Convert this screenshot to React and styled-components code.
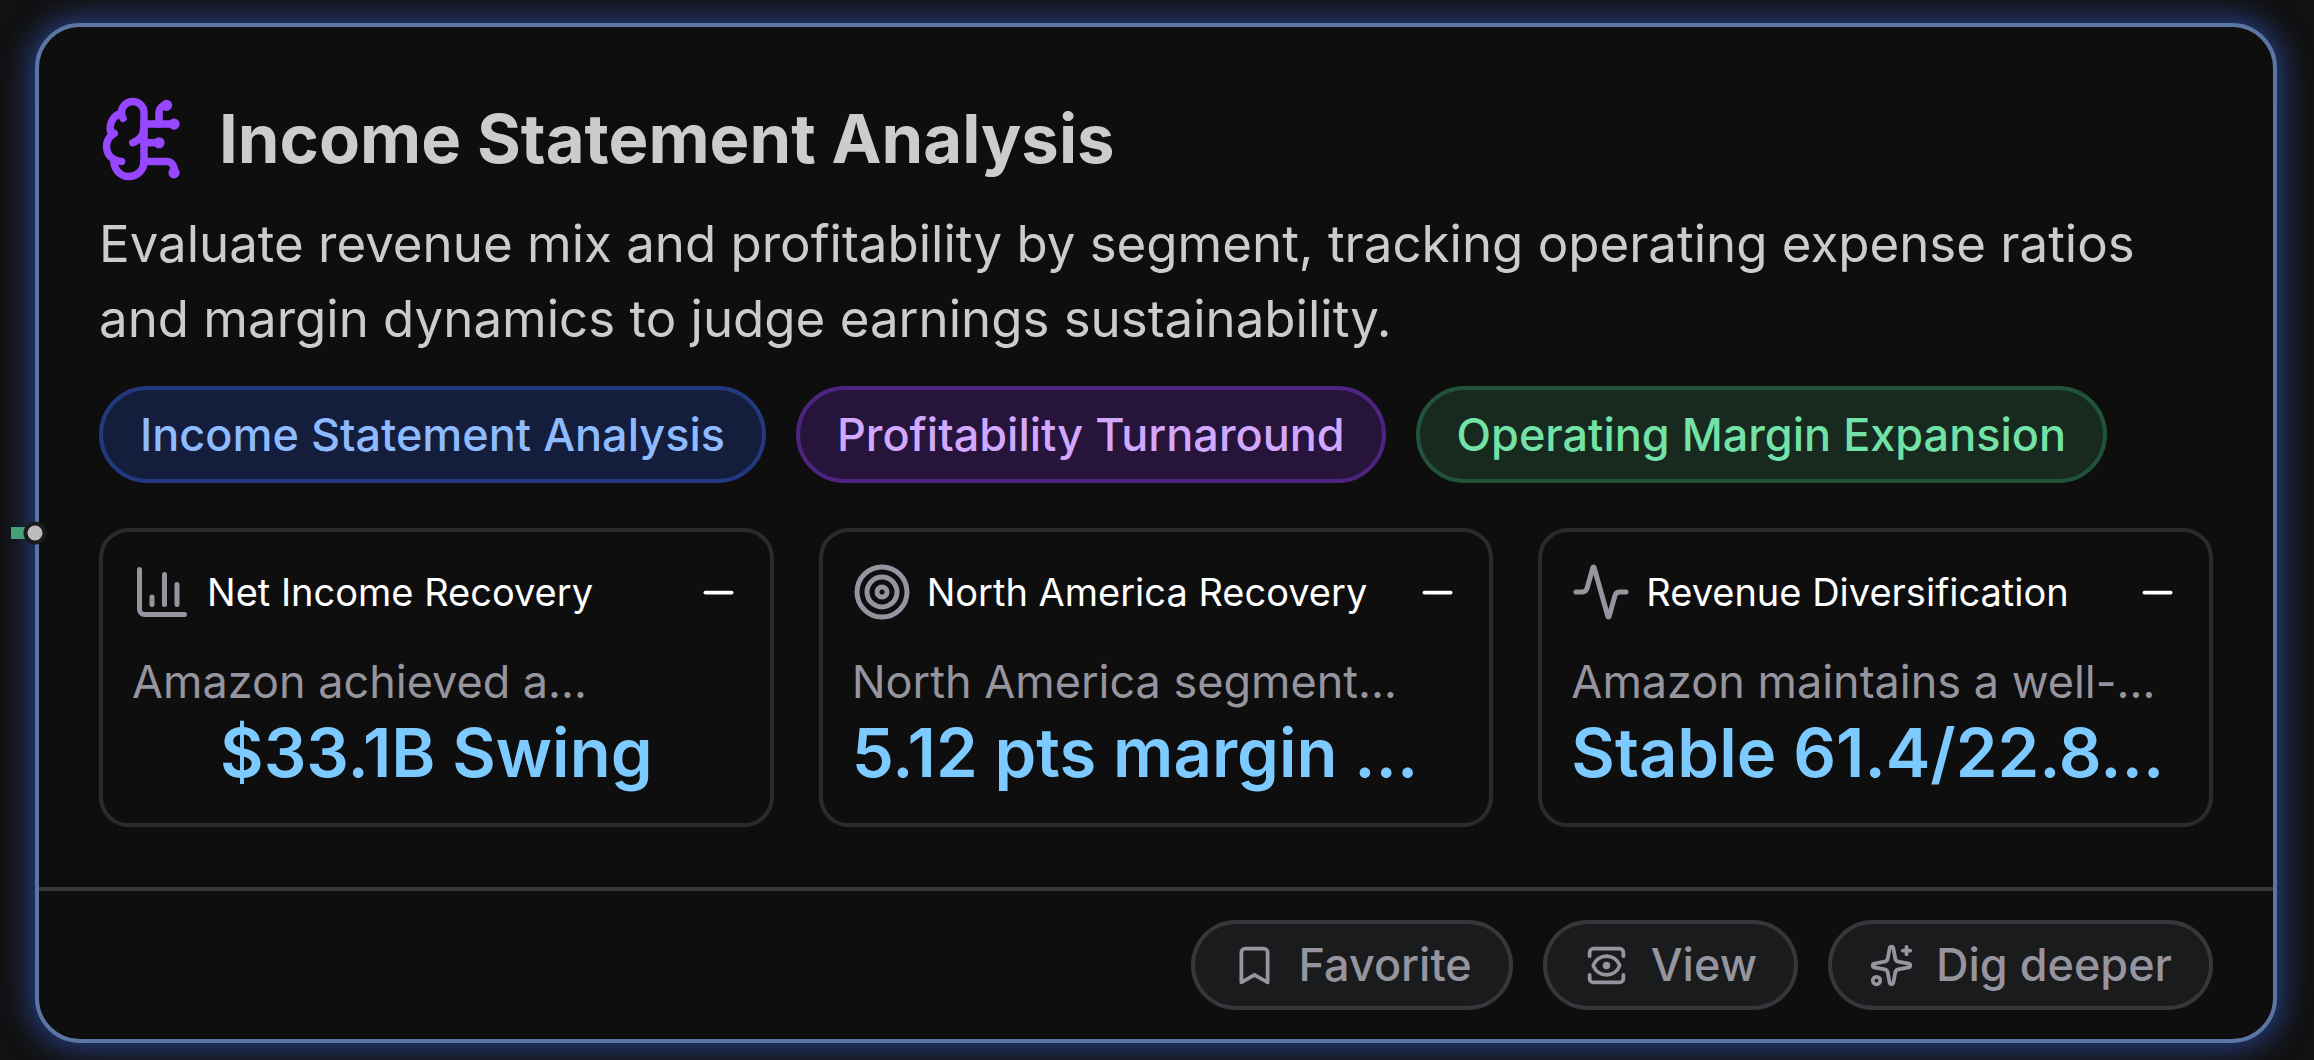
import React from "react";
import styled, { createGlobalStyle } from "styled-components";
import {
  Activity,
  Bookmark,
  BrainCircuit,
  ChartColumn,
  Minus,
  Sparkles,
  Target,
  View,
} from "lucide-react";

const GlobalStyle = createGlobalStyle`
  * {
    box-sizing: border-box;
  }
  body {
    margin: 0;
    background: #111112;
    font-family: Inter, "Liberation Sans", sans-serif;
  }
`;

const Canvas = styled.main`
  min-height: 100vh;
  padding: 23px 37px 17px 35px;
  overflow: hidden;
`;

const Node = styled.article`
  position: relative;
  border: 4px solid #5b76a3;
  border-radius: 45px;
  background: #0e0e0e;
  box-shadow: 0 0 28px 5px rgba(52, 98, 235, 0.5),
    0 0 75px rgba(255, 255, 255, 0.06);
`;

const Edge = styled.span`
  position: absolute;
  top: 50%;
  left: -28px;
  width: 14px;
  height: 12px;
  transform: translateY(-50%);
  background: #45a077;
`;

const Handle = styled.span`
  position: absolute;
  top: 50%;
  left: -4px;
  width: 23px;
  height: 23px;
  transform: translate(-50%, -50%);
  border: 4px solid #1a1b1e;
  border-radius: 50%;
  background: #bdbdbd;
`;

const Body = styled.div`
  padding: 60px;
`;

const Header = styled.header`
  display: flex;
  align-items: center;
  gap: 30px;
  margin-bottom: 15px;
  color: #9747ff;
`;

const Title = styled.h2`
  margin: 0;
  color: #cccccc;
  font-size: 67px;
  font-weight: 700;
  line-height: 104px;
`;

const Description = styled.p`
  margin: 0 0 30px;
  color: #cccccc;
  font-size: 51px;
  line-height: 75px;
`;

const Tags = styled.div`
  display: flex;
  flex-wrap: wrap;
  gap: 30px;
  margin-bottom: 45px;
`;

const tones = {
  blue: { text: "#8ebbff", fill: "#151d3d", line: "#22397f" },
  purple: { text: "#d2a8ff", fill: "#27143b", line: "#4d247f" },
  green: { text: "#73e2a7", fill: "#182a20", line: "#20533a" },
};

const Tag = styled.span`
  padding: 15px 37px;
  border: 4px solid ${({ $tone }) => tones[$tone].line};
  border-radius: 49px;
  background: ${({ $tone }) => tones[$tone].fill};
  color: ${({ $tone }) => tones[$tone].text};
  font-size: 45px;
  font-weight: 500;
  line-height: 59px;
`;

const Cards = styled.div`
  display: grid;
  grid-template-columns: repeat(3, minmax(0, 1fr));
  gap: 45px;
`;

const Card = styled.section`
  padding: 29px;
  border: 4px solid #2a2b2e;
  border-radius: 30px;
`;

const CardHeader = styled.div`
  display: flex;
  align-items: center;
  gap: 15px;
  margin-bottom: 29px;
  color: #96959f;
`;

const CardTitle = styled.h3`
  flex: 1;
  margin: 0;
  color: #fff;
  font-size: 38px;
  font-weight: 400;
  line-height: 62px;
  white-space: nowrap;
`;

const CardText = styled.p`
  margin: 0;
  color: #96959f;
  font-size: 45px;
  line-height: 59px;
  white-space: nowrap;
`;

const CardValue = styled.p`
  margin: 0;
  color: #7ccaff;
  font-size: 67px;
  font-weight: 600;
  line-height: 83px;
  text-align: ${({ $centered }) => ($centered ? "center" : "left")};
  white-space: nowrap;
`;

const Footer = styled.footer`
  display: flex;
  justify-content: flex-end;
  gap: 30px;
  padding: 29px 60px;
  border-top: 4px solid #37373b;
`;

const Action = styled.button`
  display: flex;
  align-items: center;
  gap: 22px;
  padding: 11px 37px;
  border: 4px solid #37373b;
  border-radius: 45px;
  background: #1a1b1d;
  color: #96959f;
  font-family: inherit;
  font-size: 45px;
  font-weight: 500;
  line-height: 60px;
  cursor: pointer;
`;

const tags = [
  { label: "Income Statement Analysis", tone: "blue" },
  { label: "Profitability Turnaround", tone: "purple" },
  { label: "Operating Margin Expansion", tone: "green" },
];

const cards = [
  {
    icon: ChartColumn,
    title: "Net Income Recovery",
    text: "Amazon achieved a…",
    value: "$33.1B Swing",
    centered: true,
  },
  {
    icon: Target,
    title: "North America Recovery",
    text: "North America segment…",
    value: "5.12 pts margin …",
  },
  {
    icon: Activity,
    title: "Revenue Diversification",
    text: "Amazon maintains a well-…",
    value: "Stable 61.4/22.8…",
  },
];

const actions = [
  { icon: Bookmark, label: "Favorite" },
  { icon: View, label: "View" },
  { icon: Sparkles, label: "Dig deeper" },
];

export default function App() {
  return (
    <Canvas>
      <GlobalStyle />
      <Node>
        <Edge />
        <Handle />
        <Body>
          <Header>
            <BrainCircuit size={90} />
            <Title>Income Statement Analysis</Title>
          </Header>
          <Description>
            Evaluate revenue mix and profitability by segment, tracking
            operating expense ratios and margin dynamics to judge earnings
            sustainability.
          </Description>
          <Tags>
            {tags.map(tag => (
              <Tag key={tag.label} $tone={tag.tone}>
                {tag.label}
              </Tag>
            ))}
          </Tags>
          <Cards>
            {cards.map(({ icon: Icon, title, text, value, centered }) => (
              <Card key={title}>
                <CardHeader>
                  <Icon size={60} />
                  <CardTitle>{title}</CardTitle>
                  <Minus size={45} color="#fff" />
                </CardHeader>
                <CardText>{text}</CardText>
                <CardValue $centered={centered}>{value}</CardValue>
              </Card>
            ))}
          </Cards>
        </Body>
        <Footer>
          {actions.map(({ icon: Icon, label }) => (
            <Action key={label} type="button">
              <Icon size={45} />
              {label}
            </Action>
          ))}
        </Footer>
      </Node>
    </Canvas>
  );
}
